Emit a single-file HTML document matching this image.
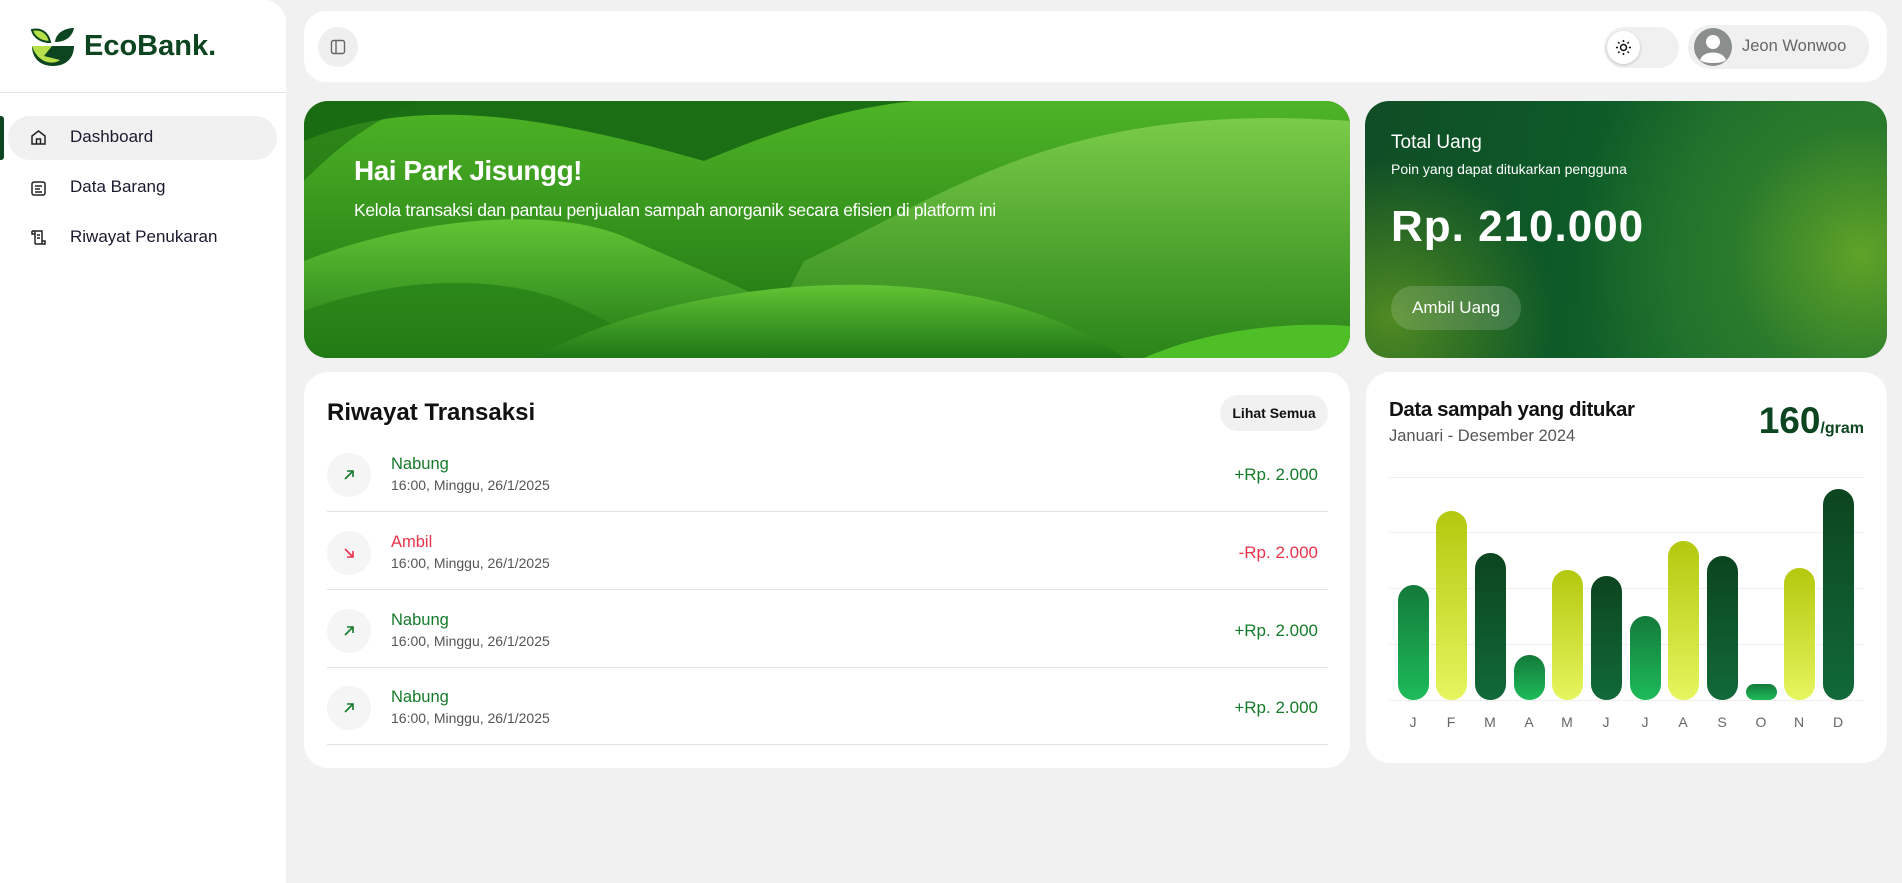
<!DOCTYPE html>
<html><head><meta charset="utf-8"><style>
*{box-sizing:border-box;margin:0;padding:0}
body{width:1902px;height:883px;background:#f1f1f1;font-family:"Liberation Sans",sans-serif;position:relative;overflow:hidden;color:#111}
.abs{position:absolute}
.side{left:0;top:0;width:286px;height:883px;background:#fff;border-radius:0 22px 0 0}
.nav{position:absolute;left:70px;font-size:17px;color:#1a1a2e}
.card{position:absolute;background:#fff;border-radius:24px}
.row{position:absolute;left:23px;width:1001px;height:78px}
.ic{position:absolute;left:0;top:19px;width:44px;height:44px;border-radius:50%;background:#f4f5f4}
.row svg{top:35px!important}
.nm{position:absolute;left:64px;top:21px;font-size:16.5px;color:#157a2a}
.dt{position:absolute;left:64px;top:43px;font-size:14px;color:#555}
.amt{position:absolute;right:10px;top:31px;font-size:17px;color:#157a2a}
.ln{position:absolute;left:0;bottom:0;width:100%;height:1px;background:#e2e2e2}
.bar{position:absolute;width:31px;border-radius:16px}
.g1{background:linear-gradient(#137a3a,#1ebb5a)}
.g2{background:linear-gradient(#b4c80e,#e6f55e)}
.g3{background:linear-gradient(#0c4520,#11693a)}
.lb{position:absolute;top:714px;font-size:14px;color:#666;width:20px;text-align:center}
.grid{position:absolute;left:1389px;width:475px;height:1px;background:#efefef}
</style></head><body>
<div class="abs side"></div>
<svg class="abs" style="left:30px;top:26px" width="46" height="42" viewBox="0 0 46 42">
<path d="M2 4 C10 2 18 6 20 16 C12 16 4 12 2 4Z" fill="#b8e04a" stroke="#0c4520" stroke-width="2"/>
<path d="M44 2 C36 2 26 6 25 16 C34 16 42 12 44 2Z" fill="#0c4520"/>
<path d="M2 20 H44 C44 32 36 40 23 40 C10 40 2 32 2 20Z" fill="#0c4520"/>
<path d="M2 20 H22 L14 30 L30 34 C24 39 8 38 2 20Z" fill="#b8e04a"/>
</svg>
<div class="abs" style="left:84px;top:30px;font-size:29px;font-weight:bold;color:#0c4520">EcoBank.</div>
<div class="abs" style="left:0;top:92px;width:286px;height:1px;background:#e5e5e5"></div>
<div class="abs" style="left:0;top:116px;width:4px;height:44px;background:#0c4520;border-radius:0 3px 3px 0"></div>
<div class="abs" style="left:8px;top:116px;width:269px;height:44px;background:#f1f1f1;border-radius:22px"></div>
<svg class="abs" style="left:30px;top:129px" width="17" height="17" viewBox="0 0 17 17" fill="none" stroke="#222" stroke-width="1.5"><path d="M2 7 L8.5 2 L15 7 V15 H2Z M6.5 15 V10 H10.5 V15"/></svg>
<div class="nav" style="top:127px">Dashboard</div>
<svg class="abs" style="left:30px;top:180px" width="17" height="17" viewBox="0 0 17 17" fill="none" stroke="#222" stroke-width="1.5"><rect x="2" y="2" width="13" height="13" rx="2"/><path d="M5 6H12M5 9H10M5 12H12"/></svg>
<div class="nav" style="top:177px">Data Barang</div>
<svg class="abs" style="left:30px;top:229px" width="17" height="17" viewBox="0 0 17 17" fill="none" stroke="#222" stroke-width="1.5"><path d="M2 2H12V15H5M2 2V5H5M5 2V15 M5 15 H15 V12 H12 M7 6H10M7 9H10"/></svg>
<div class="nav" style="top:227px">Riwayat Penukaran</div>

<div class="card" style="left:304px;top:11px;width:1583px;height:71px;border-radius:22px"></div>
<div class="abs" style="left:318px;top:27px;width:40px;height:40px;border-radius:50%;background:#efefef"></div>
<svg class="abs" style="left:330px;top:39px" width="16" height="16" viewBox="0 0 16 16" fill="none" stroke="#666" stroke-width="1.4"><rect x="1.5" y="1.5" width="13" height="13" rx="2"/><path d="M6 1.5V14.5"/></svg>
<div class="abs" style="left:1604px;top:27px;width:75px;height:41px;border-radius:21px;background:#f0f0f0"></div>
<div class="abs" style="left:1607px;top:31px;width:33px;height:33px;border-radius:50%;background:#fff;box-shadow:0 1px 3px rgba(0,0,0,.2)"></div>
<svg class="abs" style="left:1615px;top:39px" width="17" height="17" viewBox="0 0 17 17" fill="none" stroke="#111" stroke-width="1.5"><circle cx="8.5" cy="8.5" r="3"/><path d="M8.5 1V3M8.5 14V16M1 8.5H3M14 8.5H16M3.2 3.2L4.5 4.5M12.5 12.5L13.8 13.8M3.2 13.8L4.5 12.5M12.5 4.5L13.8 3.2"/></svg>
<div class="abs" style="left:1688px;top:25px;width:181px;height:44px;border-radius:22px;background:#f0f0f0"></div>
<svg class="abs" style="left:1694px;top:28px" width="38" height="38" viewBox="0 0 38 38"><circle cx="19" cy="19" r="19" fill="#8a8e8c"/><circle cx="19" cy="14" r="7" fill="#fff"/><path d="M6 32 C9 22 29 22 32 32 C28 36 10 36 6 32Z" fill="#fff"/></svg>
<div class="abs" style="left:1742px;top:37px;font-size:16.5px;color:#666">Jeon Wonwoo</div>

<div class="abs" style="left:304px;top:101px;width:1046px;height:257px;border-radius:24px;overflow:hidden">
<svg width="1046" height="257" viewBox="0 0 1046 257" preserveAspectRatio="none">
<defs>
<linearGradient id="h1" x1="0" y1="0" x2="0" y2="1"><stop offset="0" stop-color="#4fb526"/><stop offset="1" stop-color="#1b7012"/></linearGradient>
<linearGradient id="h2" x1="0" y1="0" x2="0" y2="1"><stop offset="0" stop-color="#7acb48"/><stop offset="1" stop-color="#2a8419"/></linearGradient>
<linearGradient id="h3" x1="0" y1="0" x2="0" y2="1"><stop offset="0" stop-color="#62c434"/><stop offset="1" stop-color="#1f7716"/></linearGradient>
</defs>
<rect width="1046" height="257" fill="#1b6e14"/>
<path d="M0 40 C120 -10 260 20 400 60 C520 10 600 -10 720 0 L1046 0 V257 H0Z" fill="url(#h1)"/>
<path d="M500 160 C650 90 760 0 1046 20 V257 H450Z" fill="url(#h2)"/>
<path d="M0 160 C100 120 250 100 330 140 C420 180 500 210 560 257 H0Z" fill="url(#h3)"/>
<path d="M0 210 C80 180 180 170 260 200 C330 230 360 257 360 257 H0Z" fill="#237d15" opacity=".7"/>
<path d="M230 257 C330 200 500 170 640 190 C740 205 800 240 820 257Z" fill="url(#h3)"/>
<path d="M840 257 C900 230 980 220 1046 225 V257Z" fill="#4fbf28"/>
<path d="M0 0 H120 C60 20 20 60 0 80Z" fill="#1b6a12" opacity=".6"/>
</svg>
<div class="abs" style="left:50px;top:54px;font-size:28px;font-weight:bold;color:#fff;letter-spacing:-0.5px">Hai Park Jisungg!</div>
<div class="abs" style="left:50px;top:99px;font-size:17.5px;color:#fff;letter-spacing:-0.3px">Kelola transaksi dan pantau penjualan sampah anorganik secara efisien di platform ini</div>
</div>

<div class="abs" style="left:1365px;top:101px;width:522px;height:257px;border-radius:24px;overflow:hidden;background:radial-gradient(circle at 95% 60%,#5fa328 0,#2a7a2c 25%,rgba(20,90,40,0) 55%),radial-gradient(circle at 5% 85%,#4f8a22 0,rgba(40,110,30,0) 30%),linear-gradient(100deg,#0f4d26 0%,#0e5a28 40%,#1a7a30 100%)">
<div class="abs" style="left:26px;top:31px;font-size:19px;color:#fff">Total Uang</div>
<div class="abs" style="left:26px;top:60px;font-size:14px;color:#fff">Poin yang dapat ditukarkan pengguna</div>
<div class="abs" style="left:26px;top:101px;font-size:44px;font-weight:bold;color:#fff;letter-spacing:1px">Rp. 210.000</div>
<div class="abs" style="left:26px;top:185px;width:130px;height:44px;border-radius:22px;background:rgba(255,255,255,.15);color:#fff;font-size:17px;text-align:center;line-height:44px">Ambil Uang</div>
</div>

<div class="card" style="left:304px;top:372px;width:1046px;height:396px">
<div class="abs" style="left:23px;top:27px;font-size:24px;font-weight:bold;color:#111">Riwayat Transaksi</div>
<div class="abs" style="left:916px;top:23px;width:108px;height:36px;border-radius:18px;background:#f1f1f1;font-size:14px;font-weight:bold;text-align:center;line-height:36px">Lihat Semua</div>
<div class="row" style="top:62px"><div class="ic"></div><svg class="abs" style="left:16px" width="12" height="12" viewBox="0 0 12 12" fill="none" stroke="#157a2a" stroke-width="1.6"><path d="M2 10L10 2M4 2H10V8"/></svg><div class="nm">Nabung</div><div class="dt">16:00, Minggu, 26/1/2025</div><div class="amt">+Rp. 2.000</div><div class="ln"></div></div>
<div class="row" style="top:140px"><div class="ic"></div><svg class="abs" style="left:16px" width="12" height="12" viewBox="0 0 12 12" fill="none" stroke="#e8334a" stroke-width="1.6"><path d="M2 2L10 10M4 10H10V4"/></svg><div class="nm" style="color:#e8334a">Ambil</div><div class="dt">16:00, Minggu, 26/1/2025</div><div class="amt" style="color:#e8334a">-Rp. 2.000</div><div class="ln"></div></div>
<div class="row" style="top:218px"><div class="ic"></div><svg class="abs" style="left:16px" width="12" height="12" viewBox="0 0 12 12" fill="none" stroke="#157a2a" stroke-width="1.6"><path d="M2 10L10 2M4 2H10V8"/></svg><div class="nm">Nabung</div><div class="dt">16:00, Minggu, 26/1/2025</div><div class="amt">+Rp. 2.000</div><div class="ln"></div></div>
<div class="row" style="top:295px"><div class="ic"></div><svg class="abs" style="left:16px" width="12" height="12" viewBox="0 0 12 12" fill="none" stroke="#157a2a" stroke-width="1.6"><path d="M2 10L10 2M4 2H10V8"/></svg><div class="nm">Nabung</div><div class="dt">16:00, Minggu, 26/1/2025</div><div class="amt">+Rp. 2.000</div><div class="ln"></div></div>
</div>

<div class="card" style="left:1366px;top:372px;width:521px;height:391px"></div>
<div class="abs" style="left:1389px;top:398px;font-size:20.5px;font-weight:bold;letter-spacing:-0.4px">Data sampah yang ditukar</div>
<div class="abs" style="left:1389px;top:427px;font-size:16.5px;color:#555">Januari - Desember 2024</div>
<div class="abs" style="right:38px;top:400px;color:#0c4520;font-weight:bold;white-space:nowrap"><span style="font-size:37px">160</span><span style="font-size:16px">/gram</span></div>
<div class="grid" style="top:477px"></div><div class="grid" style="top:532px"></div><div class="grid" style="top:588px"></div><div class="grid" style="top:644px"></div><div class="grid" style="top:700px"></div>
<div class="bar g1" style="left:1398px;top:585px;height:115px"></div>
<div class="bar g2" style="left:1436px;top:511px;height:189px"></div>
<div class="bar g3" style="left:1475px;top:553px;height:147px"></div>
<div class="bar g1" style="left:1514px;top:655px;height:45px"></div>
<div class="bar g2" style="left:1552px;top:570px;height:130px"></div>
<div class="bar g3" style="left:1591px;top:576px;height:124px"></div>
<div class="bar g1" style="left:1630px;top:616px;height:84px"></div>
<div class="bar g2" style="left:1668px;top:541px;height:159px"></div>
<div class="bar g3" style="left:1707px;top:556px;height:144px"></div>
<div class="bar g1" style="left:1746px;top:684px;height:16px;border-radius:8px"></div>
<div class="bar g2" style="left:1784px;top:568px;height:132px"></div>
<div class="bar g3" style="left:1823px;top:489px;height:211px"></div>
<div class="lb" style="left:1403px">J</div><div class="lb" style="left:1441px">F</div><div class="lb" style="left:1480px">M</div><div class="lb" style="left:1519px">A</div><div class="lb" style="left:1557px">M</div><div class="lb" style="left:1596px">J</div><div class="lb" style="left:1635px">J</div><div class="lb" style="left:1673px">A</div><div class="lb" style="left:1712px">S</div><div class="lb" style="left:1751px">O</div><div class="lb" style="left:1789px">N</div><div class="lb" style="left:1828px">D</div>
</body></html>
